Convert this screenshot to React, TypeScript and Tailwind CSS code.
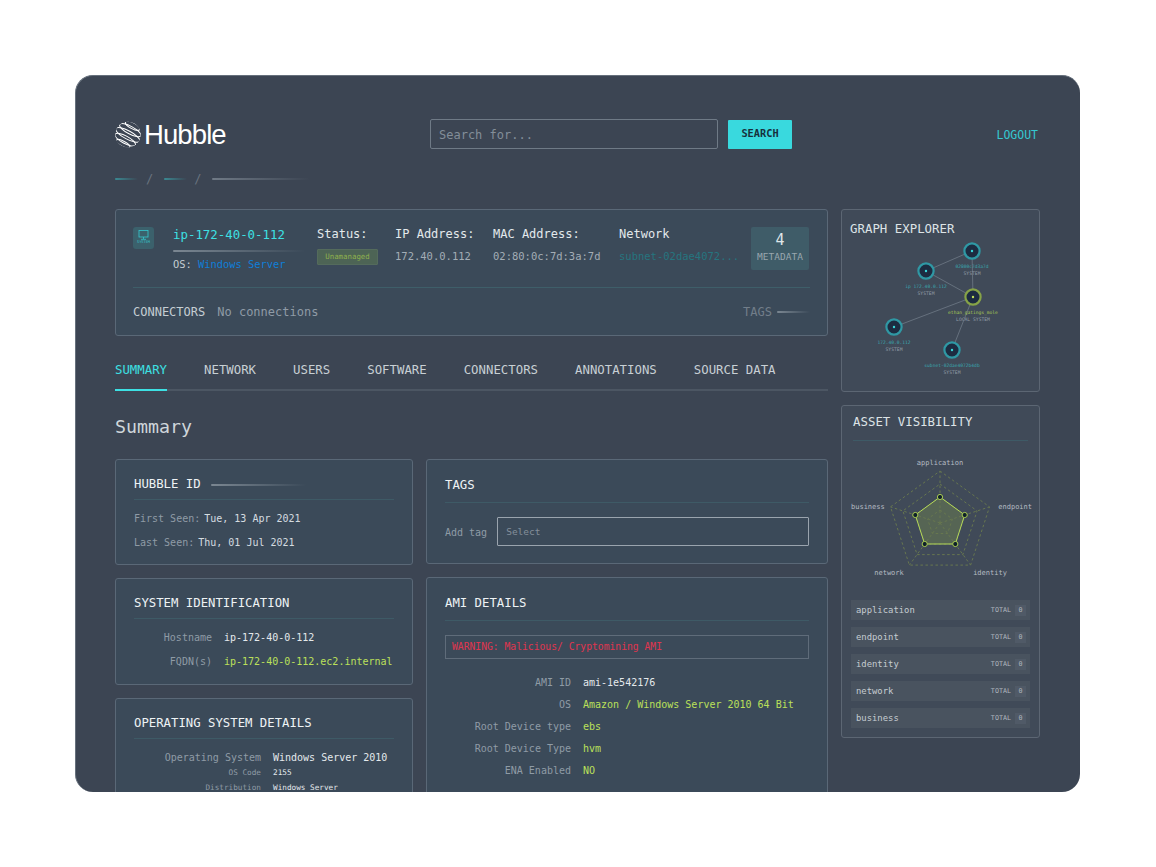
const tabs = ['SUMMARY', 'NETWORK', 'USERS', 'SOFTWARE', 'CONNECTORS', 'ANNOTATIONS', 'SOURCE DATA']
const assets = ['application', 'endpoint', 'identity', 'network', 'business']

const graphNodes = [
  { x: 130, y: 14, label: '02800c7d3a7d', sub: 'SYSTEM' },
  { x: 84, y: 34, label: 'ip 172.40.0.112', sub: 'SYSTEM' },
  { x: 131, y: 60, label: 'ethan_gatings_mole', sub: 'LOCAL SYSTEM', local: true },
  { x: 52, y: 90, label: '172.40.0.112', sub: 'SYSTEM' },
  { x: 110, y: 113, label: 'subnet-02dae4072b4db', sub: 'SYSTEM' },
]

const graphEdges = [
  [0, 1],
  [0, 2],
  [1, 2],
  [2, 3],
  [2, 4],
]

function pentagon(r: number, cx = 98, cy = 69) {
  return [0, 1, 2, 3, 4]
    .map((i) => {
      const a = (Math.PI * 2 * i) / 5 - Math.PI / 2
      return `${(cx + r * Math.cos(a)).toFixed(1)},${(cy + r * Math.sin(a)).toFixed(1)}`
    })
    .join(' ')
}

function Logo() {
  return (
    <div className="mt-[1px] flex items-center gap-[3px]">
      <svg width="26" height="27" viewBox="0 0 26 27" fill="none" stroke="#ffffff" strokeWidth="1">
        <defs>
          <clipPath id="globe">
            <circle cx="13" cy="13.5" r="12.8" />
          </clipPath>
        </defs>
        <g clipPath="url(#globe)" transform="rotate(28 13 13.5)">
          <ellipse cx="13" cy="3.6" rx="8" ry="3" />
          <ellipse cx="13" cy="8.6" rx="12" ry="3.8" />
          <ellipse cx="13" cy="14" rx="13.5" ry="4.2" />
          <ellipse cx="13" cy="19.4" rx="11.5" ry="3.8" />
          <ellipse cx="13" cy="24" rx="7.5" ry="2.6" />
        </g>
      </svg>
      <span className="font-['Liberation_Sans',sans-serif] text-[27.5px] leading-none tracking-[-0.9px] text-white">
        Hubble
      </span>
    </div>
  )
}

function Fade({ className }: { className: string }) {
  return <span className={`block h-[2px] rounded-full bg-gradient-to-r to-transparent ${className}`} />
}

function Card({ title, extra, className, head = 'h-[40px] pb-[8px]', children }: { title: string; extra?: React.ReactNode; className: string; head?: string; children: React.ReactNode }) {
  return (
    <section className={`rounded-[3px] border border-[#5a6877] bg-[#3b4a59] ${className}`}>
      <div className={`mx-[18px] flex items-end gap-[10px] border-b border-[#3e5a66] ${head}`}>
        <h3 className="text-[12.3px] leading-[14px] text-[#eef3f5]">{title}</h3>
        {extra}
      </div>
      {children}
    </section>
  )
}

function Row({ label, value, width, tone = 'text-[#e4e9ec]', small, height = 'h-[24px]' }: { label: string; value: string; width: string; tone?: string; small?: boolean; height?: string }) {
  return (
    <div className={`flex items-center gap-[12px] ${height} ${small ? 'text-[7.7px]' : 'text-[10px]'}`}>
      <span className={`${width} shrink-0 text-right text-[#8f9ba6]`}>{label}</span>
      <span className={`whitespace-nowrap ${tone}`}>{value}</span>
    </div>
  )
}

function InfoColumn({ label, value, width, tone = 'text-[#a3adb6]' }: { label: string; value: string; width: string; tone?: string }) {
  return (
    <div className={`${width} -mt-[1px] shrink-0`}>
      <div className="text-[12px] leading-[14px] text-[#e3e9ec]">{label}</div>
      <div className={`mt-[8px] whitespace-nowrap text-[10.5px] leading-[14px] ${tone}`}>{value}</div>
    </div>
  )
}

function GraphExplorer() {
  return (
    <section className="h-[183px] rounded-[3px] border border-[#5c6673] bg-[#404a58]">
      <h3 className="ml-[8px] mt-[12px] text-[12.4px] leading-[14px] text-[#dde3e6]">GRAPH EXPLORER</h3>
      <svg width="197" height="145" viewBox="0 0 197 145" className="mt-[1px] block font-['DejaVu_Sans_Mono',monospace]">
        {graphEdges.map(([a, b]) => (
          <line
            key={`${a}-${b}`}
            x1={graphNodes[a].x}
            y1={graphNodes[a].y}
            x2={graphNodes[b].x}
            y2={graphNodes[b].y}
            stroke="#6f7a86"
            strokeWidth="0.8"
          />
        ))}
        {graphNodes.map((n) => (
          <g key={n.label}>
            <circle cx={n.x} cy={n.y} r="7.6" fill="#1d2c41" stroke={n.local ? '#86a347' : '#2f98a4'} strokeWidth="2.2" />
            <circle cx={n.x} cy={n.y} r="1.2" fill={n.local ? '#c4e25c' : '#3ad9dd'} />
            <text x={n.x} y={n.y + 17} textAnchor="middle" fontSize="4.6" fill={n.local ? '#a9c955' : '#3aa6ae'}>
              {n.label}
            </text>
            <text x={n.x} y={n.y + 24} textAnchor="middle" fontSize="4.7" fill="#8f9aa5">
              {n.sub}
            </text>
          </g>
        ))}
      </svg>
    </section>
  )
}

function Radar() {
  const labels = [
    { x: 98, y: 11, t: 'application', a: 'middle' },
    { x: 190, y: 55, t: 'endpoint', a: 'end' },
    { x: 148, y: 121, t: 'identity', a: 'middle' },
    { x: 47, y: 121, t: 'network', a: 'middle' },
    { x: 9, y: 55, t: 'business', a: 'start' },
  ]
  return (
    <svg width="197" height="140" viewBox="0 0 197 140" className="mt-[13px] block font-['DejaVu_Sans_Mono',monospace]">
      <polygon points={pentagon(26)} fill="#5f7053" fillOpacity="0.7" />
      {[52, 39, 26, 13].map((r) => (
        <polygon key={r} points={pentagon(r)} fill="none" stroke="#67774f" strokeWidth="1" strokeDasharray="2.5 2.5" />
      ))}
      {pentagon(52)
        .split(' ')
        .map((p) => {
          const [x, y] = p.split(',')
          return <line key={p} x1="98" y1="69" x2={x} y2={y} stroke="#67774f" strokeWidth="1" strokeDasharray="2.5 2.5" />
        })}
      <polygon points={pentagon(26)} fill="none" stroke="#b5d95a" strokeWidth="1" />
      {pentagon(26)
        .split(' ')
        .map((p) => {
          const [x, y] = p.split(',')
          return <circle key={p} cx={x} cy={y} r="2.6" fill="#0e1f2a" stroke="#a9cc52" strokeWidth="1" />
        })}
      {labels.map((l) => (
        <text key={l.t} x={l.x} y={l.y} fontSize="7" fill="#b5bcc3" textAnchor={l.a as 'middle' | 'end' | 'start'}>
          {l.t}
        </text>
      ))}
    </svg>
  )
}

export default function App() {
  return (
    <div className="min-h-[867px] bg-white pl-[75px] pt-[75px] font-['DejaVu_Sans_Mono',monospace]">
      <div className="h-[717px] w-[1005px] overflow-hidden rounded-[18px] border-t border-l border-[#66707c] bg-[#3c4553] px-[39px] pt-[43px]">
        <header className="flex h-[30px] items-center">
          <div className="w-[315px]">
            <Logo />
          </div>
          <div className="flex h-[30px] w-[288px] items-center rounded-[2px] border border-[#6f7a86] px-[8px] pt-[1px] text-[12px] text-[#838e99]">
            Search for...
          </div>
          <button type="button" className="ml-[10px] h-[29px] w-[64px] rounded-[1px] bg-[#39d9de] text-[10.3px] font-bold text-[#17303c]">
            SEARCH
          </button>
          <a className="ml-auto mr-[3px] mt-[3px] text-[11.5px] text-[#35c8d0]">LOGOUT</a>
        </header>

        <nav className="mt-[29px] flex h-[2px] items-center">
          <Fade className="w-[23px] from-[#3a8a93]" />
          <span className="ml-[8px] text-[12px] text-[#69737f]">/</span>
          <Fade className="ml-[11px] w-[23px] from-[#3a8a93]" />
          <span className="ml-[7px] text-[12px] text-[#69737f]">/</span>
          <Fade className="ml-[11px] w-[98px] from-[#707a86]" />
        </nav>

        <div className="mt-[29px] flex gap-[13px]">
          <main className="w-[713px] shrink-0">
            <section className="h-[127px] rounded-[3px] border border-[#5a6877] bg-[#3b4a59] px-[17px] pt-[18px]">
              <div className="flex h-[60px] border-b border-[#3e5e69]">
                <div className="w-[40px] shrink-0">
                  <div className="-mt-[1px] flex h-[22px] w-[21px] flex-col items-center rounded-[3px] bg-[#3b616c] pt-[3px]">
                    <svg width="11" height="10" viewBox="0 0 11 10" fill="none" stroke="#35c8d0" strokeWidth="0.8">
                      <rect x="1" y="0.5" width="9" height="6.5" />
                      <path d="M5.5 7v2M3 9.3h5" />
                    </svg>
                    <span className="text-[3.6px] leading-[5px] text-[#35c8d0]">SYSTEM</span>
                  </div>
                </div>
                <div className="w-[144px] shrink-0">
                  <div className="-mt-[1px] text-[12.4px] leading-[16px] text-[#3de0e3]">ip-172-40-0-112</div>
                  <Fade className="mt-[7px] w-[132px] from-[#7b8792]" />
                  <div className="mt-[5px] whitespace-nowrap text-[10.4px] leading-[14px] text-[#c5ced3]">
                    OS: <span className="text-[#0f7fd8]">Windows Server</span>
                  </div>
                </div>
                <div className="-mt-[1px] w-[78px] shrink-0">
                  <div className="text-[12px] leading-[14px] text-[#e3e9ec]">Status:</div>
                  <div className="mt-[8px] flex h-[16px] w-[61px] items-center justify-center rounded-[1px] border border-[#546b5c] bg-[#4d6455] text-[7.4px] text-[#8db04e]">
                    Unamanaged
                  </div>
                </div>
                <InfoColumn label="IP Address:" value="172.40.0.112" width="w-[98px]" />
                <InfoColumn label="MAC Address:" value="02:80:0c:7d:3a:7d" width="w-[126px]" />
                <InfoColumn label="Network" value="subnet-02dae4072..." width="w-[132px]" tone="text-[#26757f]" />
                <div className="-mt-[1px] flex h-[43px] w-[58px] shrink-0 flex-col items-center rounded-[2px] bg-[#3f5c68] pt-[5px]">
                  <span className="text-[15px] leading-[17px] text-[#dfe6e8]">4</span>
                  <span className="mt-[2px] text-[9.5px] leading-[12px] text-[#99a6ae]">METADATA</span>
                </div>
              </div>
              <div className="mt-[17px] flex items-center text-[12px] leading-[14px]">
                <span className="text-[#c5ced3]">CONNECTORS</span>
                <span className="ml-[12px] text-[#8f9ba6]">No connections</span>
                <span className="ml-auto text-[#727e8a]">TAGS</span>
                <Fade className="ml-[5px] w-[33px] from-[#7b8792]" />
              </div>
            </section>

            <div className="mt-[27px] flex h-[28px] gap-[37px] border-b-2 border-[#4c5663] text-[12.35px] leading-[14px]">
              {tabs.map((tab, i) => (
                <div
                  key={tab}
                  className={i === 0 ? 'h-[28px] border-b-2 border-[#3de0e3] text-[#3de0e3]' : 'text-[#c8d0d5]'}
                >
                  {tab}
                </div>
              ))}
            </div>

            <h2 className="mt-[25px] text-[18.3px] leading-[22px] text-[#cfd6da]">Summary</h2>

            <div className="mt-[21px] flex gap-[13px]">
              <div className="flex w-[298px] shrink-0 flex-col gap-[13px]">
                <Card title="HUBBLE ID" className="h-[106px]" extra={<Fade className="mb-[5px] w-[95px] from-[#7b8792]" />}>
                  <div className="mx-[18px] mt-[6px] text-[10px]">
                    <div className="flex h-[24px] items-center gap-[4px] whitespace-nowrap">
                      <span className="text-[#8f9ba6]">First Seen:</span>
                      <span className="text-[#d5dce0]">Tue, 13 Apr 2021</span>
                    </div>
                    <div className="flex h-[24px] items-center gap-[4px] whitespace-nowrap">
                      <span className="text-[#8f9ba6]">Last Seen:</span>
                      <span className="text-[#d5dce0]">Thu, 01 Jul 2021</span>
                    </div>
                  </div>
                </Card>
                <Card title="SYSTEM IDENTIFICATION" className="h-[107px]">
                  <div className="mx-[18px] mt-[6px]">
                    <Row label="Hostname" value="ip-172-40-0-112" width="w-[78px]" />
                    <Row label="FQDN(s)" value="ip-172-40-0-112.ec2.internal" width="w-[78px]" tone="text-[#bce05a]" />
                  </div>
                </Card>
                <Card title="OPERATING SYSTEM DETAILS" className="h-[120px]">
                  <div className="mx-[18px] mt-[10px]">
                    <Row label="Operating System" value="Windows Server 2010" width="w-[127px]" height="h-[16px]" />
                    <Row label="OS Code" value="2155" width="w-[127px]" small height="h-[15px]" />
                    <Row label="Distribution" value="Windows Server" width="w-[127px]" small height="h-[15px]" />
                  </div>
                </Card>
              </div>

              <div className="flex w-[402px] shrink-0 flex-col gap-[13px]">
                <Card title="TAGS" className="h-[105px]" head="h-[43px] pb-[10px]">
                  <div className="mx-[18px] mt-[14px] flex items-center gap-[10px] text-[10px]">
                    <span className="pt-[1px] text-[#8f9ba6]">Add tag</span>
                    <div className="flex h-[29px] flex-1 items-center rounded-[1px] border border-[#9aa4ae] px-[8px] pt-[1px] text-[9.5px] text-[#838e99]">
                      Select
                    </div>
                  </div>
                </Card>
                <Card title="AMI DETAILS" className="h-[230px]" head="h-[43px] pb-[10px]">
                  <div className="mx-[18px] mt-[14px] flex h-[24px] items-center border border-[#5f6c7a] px-[6px] pt-[1px] text-[9.7px] text-[#e0354f]">
                    WARNING: Malicious/ Cryptomining AMI
                  </div>
                  <div className="mx-[18px] mt-[12px]">
                    <Row label="AMI ID" value="ami-1e542176" width="w-[126px]" height="h-[22px]" />
                    <Row label="OS" value="Amazon / Windows Server 2010 64 Bit" width="w-[126px]" tone="text-[#bce05a]" height="h-[22px]" />
                    <Row label="Root Device type" value="ebs" width="w-[126px]" tone="text-[#bce05a]" height="h-[22px]" />
                    <Row label="Root Device Type" value="hvm" width="w-[126px]" tone="text-[#bce05a]" height="h-[22px]" />
                    <Row label="ENA Enabled" value="NO" width="w-[126px]" tone="text-[#bce05a]" height="h-[22px]" />
                  </div>
                </Card>
              </div>
            </div>
          </main>

          <aside className="flex w-[199px] shrink-0 flex-col gap-[13px]">
            <GraphExplorer />
            <section className="h-[333px] rounded-[3px] border border-[#5c6673] bg-[#404a58]">
              <div className="mx-[11px] h-[35px] border-b border-[#3e5a66] pt-[9px] text-[12.4px] leading-[14px] text-[#dde3e6]">
                ASSET VISIBILITY
              </div>
              <Radar />
              <div className="mx-[9px] mt-[6px] flex flex-col gap-[7px]">
                {assets.map((name) => (
                  <div key={name} className="flex h-[20px] items-center bg-[#49535f] pl-[5px] pr-[4px] text-[8.9px] text-[#c5ccd1]">
                    <span className="pt-[1px]">{name}</span>
                    <span className="ml-auto text-[6.7px] text-[#b0b8bf]">TOTAL</span>
                    <span className="ml-[4px] flex h-[11px] w-[11px] items-center justify-center bg-[#505a67] text-[6.7px] text-[#b0b8bf]">0</span>
                  </div>
                ))}
              </div>
            </section>
          </aside>
        </div>
      </div>
    </div>
  )
}
